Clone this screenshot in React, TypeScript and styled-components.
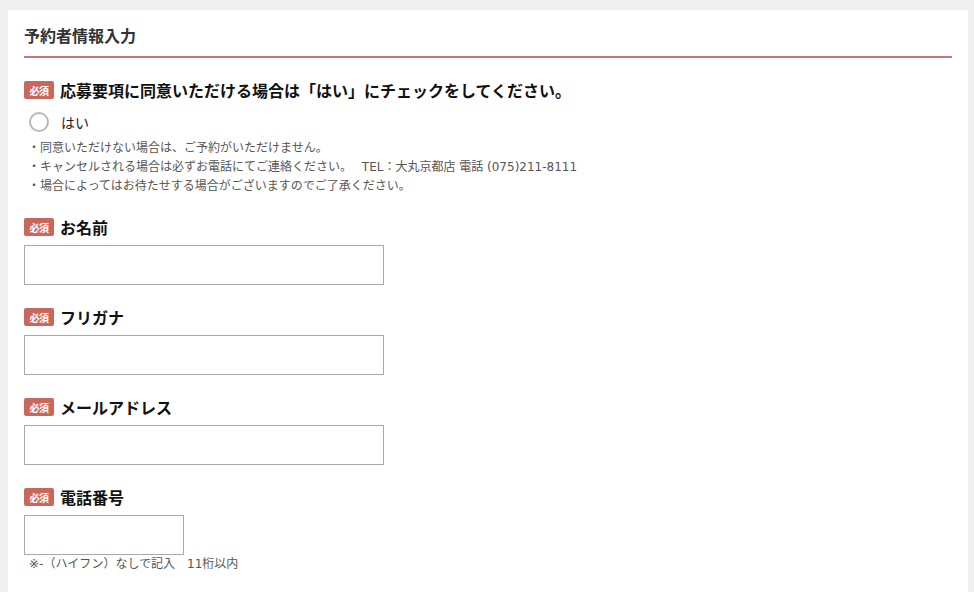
import React from "react";
import styled, { createGlobalStyle } from "styled-components";

const Global = createGlobalStyle`
  html, body { margin: 0; padding: 0; background: #f0f0f0; }
  body { font-family: "Noto Sans CJK JP", "Noto Sans", sans-serif; color: #111; }
`;

const Page = styled.div`
  padding: 10px 6px 0 8px;
  height: 592px;
  box-sizing: border-box;
  overflow: hidden;
`;

const Panel = styled.div`
  background: #fff;
  padding: 14px 16px 40px 16px;
  min-height: 620px;
  box-sizing: border-box;
`;

const Title = styled.h2`
  margin: 0;
  font-size: 16px;
  font-weight: 700;
  color: #333;
  line-height: 22px;
  padding-bottom: 10px;
  border-bottom: 2px solid #cc7378;
`;

const Section = styled.div<{ $top: number }>`
  margin-top: ${(p) => p.$top}px;
`;

const LabelRow = styled.div`
  display: flex;
  align-items: center;
  gap: 6px;
  height: 20px;
`;

const Badge = styled.span`
  display: inline-flex;
  align-items: center;
  justify-content: center;
  width: 30px;
  height: 18px;
  background: #c8685c;
  color: #fff;
  font-size: 10px;
  font-weight: 700;
  border-radius: 2px;
  letter-spacing: -0.5px;
`;

const Label = styled.span`
  font-size: 16px;
  font-weight: 700;
  color: #111;
  line-height: 20px;
`;

const RadioRow = styled.label`
  display: flex;
  align-items: center;
  gap: 12px;
  margin-top: 12px;
  padding-left: 5px;
  font-size: 14px;
  color: #222;
`;

const Radio = styled.span`
  width: 16px;
  height: 16px;
  border: 2px solid #b8b8b8;
  border-radius: 50%;
  background: #fff;
`;

const Notes = styled.ul`
  list-style: none;
  margin: 7px 0 0 0;
  padding: 0 0 0 4px;
  font-family: "DejaVu Sans", "Noto Sans CJK JP", sans-serif;
  font-size: 12px;
  line-height: 19px;
  color: #555;
`;

const TextInput = styled.input<{ $w: number }>`
  display: block;
  margin-top: 8px;
  width: ${(p) => p.$w}px;
  height: 40px;
  box-sizing: border-box;
  border: 1px solid #a8a8a8;
  background: #fff;
  outline: none;
  padding: 0 8px;
  font-size: 14px;
`;

const Hint = styled.div`
  font-family: "DejaVu Sans", "Noto Sans CJK JP", sans-serif;
  font-size: 12px;
  color: #555;
  margin-top: 1px;
  padding-left: 5px;
  line-height: 17px;
`;

const fields = [
  { label: "お名前", w: 360 },
  { label: "フリガナ", w: 360 },
  { label: "メールアドレス", w: 360 },
  { label: "電話番号", w: 160 },
];

export default function App() {
  return (
    <>
      <Global />
      <Page>
        <Panel>
          <Title>予約者情報入力</Title>
          <Section $top={22}>
            <LabelRow>
              <Badge>必須</Badge>
              <Label>応募要項に同意いただける場合は「はい」にチェックをしてください。</Label>
            </LabelRow>
            <RadioRow>
              <Radio />
              はい
            </RadioRow>
            <Notes>
              <li>・同意いただけない場合は、ご予約がいただけません。</li>
              <li>・キャンセルされる場合は必ずお電話にてご連絡ください。　&nbsp;TEL：大丸京都店 電話 (075)211-8111</li>
              <li>・場合によってはお待たせする場合がございますのでご了承ください。</li>
            </Notes>
          </Section>
          {fields.map((f, i) => (
            <Section key={f.label} $top={i === 0 ? 21 : 22}>
              <LabelRow>
                <Badge>必須</Badge>
                <Label>{f.label}</Label>
              </LabelRow>
              <TextInput type="text" $w={f.w} />
              {i === 3 && <Hint>※-（ハイフン）なしで記入　11桁以内</Hint>}
            </Section>
          ))}
        </Panel>
      </Page>
    </>
  );
}
